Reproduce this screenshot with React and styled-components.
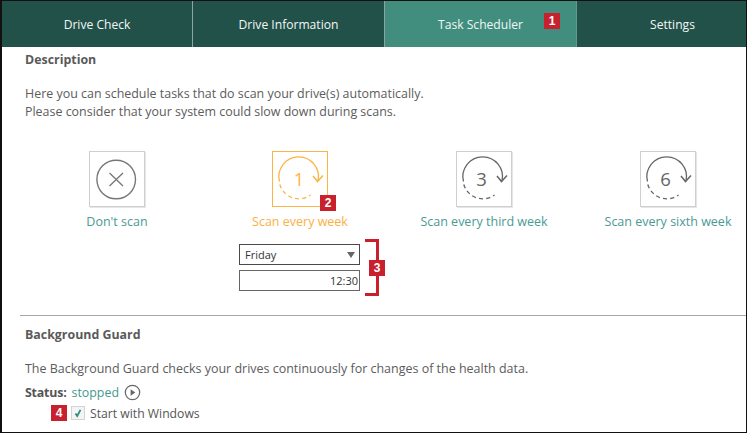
import React from "react";
import styled, { createGlobalStyle } from "styled-components";

const Global = createGlobalStyle`
  html, body { margin: 0; padding: 0; background: #fff; }
  body { font-family: "Open Sans", "Noto Sans", "Liberation Sans", sans-serif; }
`;

const Frame = styled.div`
  position: relative;
  box-sizing: border-box;
  width: 747px;
  height: 433px;
  border: 1px solid #111;
  border-left-width: 2px;
  overflow: hidden;
  background: #fff;
  color: #555;
  font-size: 12.4px;
`;

const TabBar = styled.div`
  display: grid;
  grid-template-columns: 191px repeat(3, 192px);
  height: 46px;
  background: #225149;
`;

const Tab = styled.div`
  position: relative;
  display: flex;
  align-items: center;
  justify-content: center;
  box-sizing: border-box;
  color: #f2f7f5;
  font-size: 12.1px;
  background: ${(p) => (p.$active ? "#418e7f" : "transparent")};
  border-right: 1px solid ${(p) => (p.$plain ? "transparent" : p.$active ? "#5f9a8e" : "#8ba5a0")};
`;

const Badge = styled.span`
  position: absolute;
  display: flex;
  align-items: center;
  justify-content: center;
  width: 16px;
  height: 16px;
  background: #c9202e;
  color: #fff;
  font-family: "Liberation Sans", sans-serif;
  font-weight: 700;
  font-size: 12px;
`;

const Content = styled.div`
  padding: 5px 0 0 23px;
`;

const Heading = styled.div`
  font-weight: 700;
  font-size: 12.4px;
  line-height: 16px;
  color: #5a5a5a;
`;

const Para = styled.p`
  margin: 17px 0 0;
  font-size: 12.45px;
  line-height: 18px;
  color: #5c5c5c;
`;

const Options = styled.div`
  display: grid;
  grid-template-columns: repeat(4, 184px);
  margin: 30px 0 0 -1px;
  width: 736px;
`;

const Option = styled.div`
  display: flex;
  flex-direction: column;
  align-items: center;
  white-space: nowrap;
  font-size: 12.5px;
  color: ${(p) => (p.$on ? "#fbb03f" : "#4a9a94")};
  &:first-child { padding-left: 2px; }
`;

const IconBox = styled.div`
  position: relative;
  box-sizing: border-box;
  width: 56px;
  height: 56px;
  display: flex;
  align-items: center;
  justify-content: center;
  border: ${(p) => (p.$on ? "1px solid #fbb545" : "1px solid #cfcfcf")};
  box-shadow: ${(p) => (p.$on ? "none" : "1px 1px 0 #e6e6e6")};
  margin-bottom: 6px;
  & > svg { flex: none; }
`;

const Fields = styled.div`
  display: flex;
  flex-direction: column;
  gap: 5px;
  width: 121px;
  margin: 14px 0 0 214px;
`;

const Select = styled.div`
  box-sizing: border-box;
  height: 21px;
  padding: 0 5px;
  display: flex;
  align-items: center;
  justify-content: space-between;
  border: 1px solid #4a4a4a;
  color: #333;
  font-size: 11px;
`;

const Arrow = styled.span`
  width: 0;
  height: 0;
  margin-right: -1px;
  border-left: 4.5px solid transparent;
  border-right: 4.5px solid transparent;
  border-top: 6px solid #666;
`;

const TimeInput = styled.div`
  box-sizing: border-box;
  height: 21px;
  padding: 0 1px;
  display: flex;
  align-items: center;
  justify-content: flex-end;
  border: 1px solid #666;
  color: #333;
  font-size: 11px;
`;

const Divider = styled.hr`
  margin: 24px 0 0 18px;
  height: 1px;
  border: 0;
  background: #a8a8a8;
`;

const Guard = styled.div`
  padding: 11px 0 0 23px;
`;

const GuardText = styled.p`
  margin: 17px 0 0;
  font-size: 12.47px;
  line-height: 18px;
  color: #5c5c5c;
`;

const StatusRow = styled.div`
  display: flex;
  align-items: center;
  gap: 5px;
  height: 20px;
  margin-top: 4px;
  font-size: 12.4px;
`;

const StatusLabel = styled.span`
  font-weight: 700;
  color: #555;
  letter-spacing: -0.2px;
`;

const StatusValue = styled.span`
  color: #3f9a8c;
`;

const CheckRow = styled.div`
  display: flex;
  align-items: center;
  gap: 5px;
  height: 20px;
  margin: 1px 0 0 46px;
  font-size: 12.2px;
  color: #555;
`;

const CheckBox = styled.span`
  display: flex;
  align-items: center;
  justify-content: center;
  box-sizing: border-box;
  width: 14px;
  height: 14px;
  border: 1px solid #d4d4d4;
  background: #f4f4f4;
`;

const BracketBox = styled.div`
  position: absolute;
  left: 363px;
  top: 238px;
  width: 14px;
  height: 57px;
  box-sizing: border-box;
  border: 3px solid #c9202e;
  border-left: 0;
`;

function Cycle({ n, color, fs, dx }) {
  return (
    <svg width="56" height="56" viewBox="0 0 56 56" fill="none" stroke={color} strokeWidth="1.3">
      <path d="M7.5 30.5 A19.8 19.8 0 1 1 46 30" />
      <path d="M41 25 L45.5 30.5 L51 24.5" strokeWidth="1.5" />
      <path d="M7.8 33.5 A19.8 19.8 0 0 0 38.5 44" strokeDasharray="4 3.2" />
      <text x={dx} y="34.5" textAnchor="middle" fill={color} stroke="none" fontSize={fs} fontFamily="Open Sans, sans-serif">{n}</text>
    </svg>
  );
}

function Cross() {
  return (
    <svg width="56" height="56" viewBox="0 0 56 56" fill="none" stroke="#777">
      <circle cx="27.2" cy="28.5" r="19.3" strokeWidth="1.4" />
      <path d="M20.5 22 L34 35 M34 22 L20.5 35" strokeWidth="1.3" />
    </svg>
  );
}

export default function App() {
  return (
    <>
      <Global />
      <Frame>
        <TabBar>
          <Tab>Drive Check</Tab>
          <Tab>Drive Information</Tab>
          <Tab $active>
            Task Scheduler
            <Badge style={{ left: 159, top: 12 }}>1</Badge>
          </Tab>
          <Tab $plain>Settings</Tab>
        </TabBar>
        <Content>
          <Heading>Description</Heading>
          <Para>
            Here you can schedule tasks that do scan your drive(s) automatically.
            <br />
            Please consider that your system could slow down during scans.
          </Para>
          <Options>
            <Option>
              <IconBox><Cross /></IconBox>
              Don't scan
            </Option>
            <Option $on>
              <IconBox $on>
                <Cycle n="1" color="#fbb545" fs="18" dx="27" />
                <Badge style={{ left: 47, top: 43 }}>2</Badge>
              </IconBox>
              Scan every week
            </Option>
            <Option>
              <IconBox><Cycle n="3" color="#666" fs="18.5" dx="25.5" /></IconBox>
              Scan every third week
            </Option>
            <Option>
              <IconBox><Cycle n="6" color="#666" fs="18.5" dx="25.5" /></IconBox>
              Scan every sixth week
            </Option>
          </Options>
          <Fields>
            <Select>Friday<Arrow /></Select>
            <TimeInput>12:30</TimeInput>
          </Fields>
        </Content>
        <Divider />
        <Guard>
          <Heading>Background Guard</Heading>
          <GuardText>The Background Guard checks your drives continuously for changes of the health data.</GuardText>
          <StatusRow>
            <StatusLabel>Status:</StatusLabel>
            <StatusValue>stopped</StatusValue>
            <svg width="17" height="17" viewBox="0 0 18 18" fill="none">
              <circle cx="9" cy="9" r="7.6" stroke="#666" strokeWidth="1.3" />
              <path d="M7 5.6 L12 9 L7 12.4 Z" fill="#666" />
            </svg>
          </StatusRow>
          <CheckRow>
            <CheckBox>
              <svg width="10" height="10" viewBox="0 0 10 10" fill="none">
                <path d="M2.5 5.5 L4.2 8 L7.5 1.8" stroke="#2f8f7f" strokeWidth="1.8" />
              </svg>
            </CheckBox>
            Start with Windows
          </CheckRow>
        </Guard>
        <BracketBox />
        <Badge style={{ left: 367, top: 259 }}>3</Badge>
        <Badge style={{ left: 49, top: 404 }}>4</Badge>
      </Frame>
    </>
  );
}
